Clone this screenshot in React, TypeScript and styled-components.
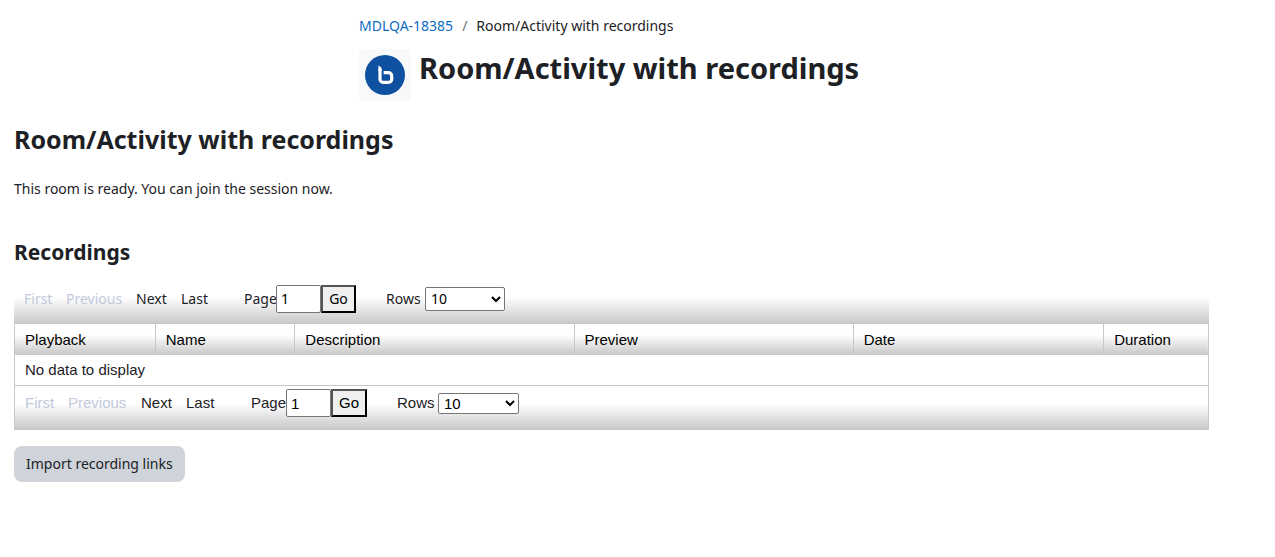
import React, { useId } from "react";
import styled, { createGlobalStyle } from "styled-components";

const uiFont = `"Segoe UI", "Noto Sans", "Open Sans", sans-serif`;
const tableFont = `"Liberation Sans", Arial, sans-serif`;

const GlobalStyle = createGlobalStyle`
  * { box-sizing: border-box; }
  body {
    margin: 0;
    background: #fff;
    color: #1d2125;
    font: 14px/24px ${uiFont};
  }
`;

const Page = styled.div`
  padding: 14px 66px 14px 14px;
`;

const Header = styled.header`
  padding-left: 345px;
`;

const Breadcrumb = styled.ol`
  display: flex;
  margin: 0;
  padding: 0;
  list-style: none;
`;

const Crumb = styled.li`
  & + &::before {
    content: "/";
    padding: 0 9px;
    color: #6a737b;
  }
`;

const CrumbLink = styled.a`
  color: #0f6cbf;
  text-decoration: none;
`;

const TitleRow = styled.div`
  display: flex;
  gap: 8px;
  margin-top: 11px;
`;

const IconBox = styled.div`
  display: flex;
  flex: none;
  align-items: center;
  justify-content: center;
  width: 52px;
  height: 52px;
  border-radius: 4px;
  background: #f8f9fa;
`;

const Title = styled.h1`
  margin: 0;
  font-size: 29px;
  line-height: 38px;
`;

const RoomTitle = styled.h2`
  margin: 22px 0 0;
  font-size: 25px;
  line-height: 32px;
`;

const Status = styled.p`
  margin: 22px 0 0;
`;

const SectionTitle = styled.h3`
  margin: 35px 0 0;
  font-size: 21px;
  line-height: 32px;
`;

const Pager = styled.form<{ $inTable?: boolean }>`
  display: grid;
  grid-template-columns: ${(p) =>
    p.$inTable ? "43px 73px 45px 65px 35px 45px 66px 41px 81px" : "42px 70px 45px 63px 32px 45px 65px 39px 80px"};
  align-items: center;
  height: ${(p) => (p.$inTable ? 44 : 45)}px;
  margin-top: ${(p) => (p.$inTable ? 0 : 11)}px;
  padding: ${(p) => (p.$inTable ? "0 10px 10px" : "0 10px 6px")};
  border: solid #c7c7c7;
  border-width: ${(p) => (p.$inTable ? "0 1px" : "0")};
  background: linear-gradient(#fff 40%, #c7c7c7);
  font-family: ${(p) => (p.$inTable ? tableFont : uiFont)};
  font-size: ${(p) => (p.$inTable ? 15 : 14)}px;
`;

const PagerLink = styled.a`
  color: #1d2125;
  text-decoration: none;
`;

const PagerOff = styled.span`
  color: #c2c9dd;
`;

const PageInput = styled.input`
  width: 45px;
  height: 28px;
  padding: 1px 4px;
  border: 1px solid #767676;
  border-radius: 2px;
  background: #fff;
  color: #000;
  font: inherit;
`;

const GoButton = styled.button<{ $inTable?: boolean }>`
  width: ${(p) => (p.$inTable ? 36 : 35)}px;
  height: 28px;
  padding: 0;
  border: 2px solid;
  border-color: #555 #000 #000 #555;
  background: #efefef;
  color: #000;
  font: inherit;
`;

const RowsSelect = styled.select<{ $inTable?: boolean }>`
  width: 100%;
  height: ${(p) => (p.$inTable ? 21 : 24)}px;
  padding: 0 1px;
  border: 1px solid #767676;
  border-radius: 2px;
  background: #fff;
  color: #000;
  font: inherit;
`;

const DataTable = styled.table`
  width: 100%;
  table-layout: fixed;
  border-collapse: separate;
  border-spacing: 0;
  border: solid #c7c7c7;
  border-width: 0 1px 1px;
  font: 15px/20px ${tableFont};
`;

const HeadRow = styled.tr`
  background: linear-gradient(#fff 35%, #c7c7c7);
`;

const HeadCell = styled.th<{ $width?: string }>`
  width: ${(p) => p.$width ?? "auto"};
  height: 31px;
  padding: 0 10px;
  border-right: 1px solid #c7c7c7;
  color: #000;
  font-weight: 400;
  text-align: left;

  &:last-child {
    border-right: 0;
  }
`;

const EmptyCell = styled.td`
  height: 30px;
  padding: 0 10px;
`;

const ImportButton = styled.button`
  height: 36px;
  margin-top: 16px;
  padding: 0 12px;
  border: 0;
  border-radius: 8px;
  background: #ced4da;
  color: #1d2125;
  font: inherit;
`;

const columns = [
  { name: "Playback", width: "11.8%" },
  { name: "Name", width: "11.7%" },
  { name: "Description", width: "23.4%" },
  { name: "Preview", width: "23.4%" },
  { name: "Date", width: "21%" },
  { name: "Duration" },
];

function Paginator({ inTable }: { inTable?: boolean }) {
  const id = useId();
  return (
    <Pager $inTable={inTable} onSubmit={(e) => e.preventDefault()}>
      <PagerOff>First</PagerOff>
      <PagerOff>Previous</PagerOff>
      <PagerLink href="#next">Next</PagerLink>
      <PagerLink href="#last">Last</PagerLink>
      <label htmlFor={`${id}-page`}>Page</label>
      <PageInput id={`${id}-page`} type="text" defaultValue="1" />
      <GoButton $inTable={inTable} type="submit">Go</GoButton>
      <label htmlFor={`${id}-rows`}>Rows</label>
      <RowsSelect $inTable={inTable} id={`${id}-rows`} defaultValue="10">
        <option>10</option>
        <option>25</option>
        <option>50</option>
      </RowsSelect>
    </Pager>
  );
}

export default function App() {
  return (
    <>
      <GlobalStyle />
      <Page>
        <Header>
          <nav aria-label="Navigation bar">
            <Breadcrumb>
              <Crumb><CrumbLink href="#course">MDLQA-18385</CrumbLink></Crumb>
              <Crumb>Room/Activity with recordings</Crumb>
            </Breadcrumb>
          </nav>
          <TitleRow>
            <IconBox>
              <svg width="40" height="40" viewBox="0 0 40 40" aria-hidden="true">
                <circle cx="20" cy="20" r="20" fill="#0f51a1" />
                <path
                  d="M15 14V24.2a3.2 3.2 0 0 0 3.2 3.2h5.3a3.2 3.2 0 0 0 3.2-3.2v-3.3a3.2 3.2 0 0 0-3.2-3.2H18.6"
                  fill="none"
                  stroke="#fff"
                  strokeWidth="3.2"
                />
                <path d="M13.4 10.6l1.6.9q1.6.8 1.6 2.5v2h-3.2z" fill="#fff" />
              </svg>
            </IconBox>
            <Title>Room/Activity with recordings</Title>
          </TitleRow>
        </Header>
        <main>
          <RoomTitle>Room/Activity with recordings</RoomTitle>
          <Status>This room is ready. You can join the session now.</Status>
          <SectionTitle>Recordings</SectionTitle>
          <Paginator />
          <DataTable>
            <thead>
              <HeadRow>
                {columns.map((c) => (
                  <HeadCell key={c.name} $width={c.width} scope="col">{c.name}</HeadCell>
                ))}
              </HeadRow>
            </thead>
            <tbody>
              <tr><EmptyCell colSpan={6}>No data to display</EmptyCell></tr>
            </tbody>
          </DataTable>
          <Paginator inTable />
          <ImportButton type="button">Import recording links</ImportButton>
        </main>
      </Page>
    </>
  );
}
